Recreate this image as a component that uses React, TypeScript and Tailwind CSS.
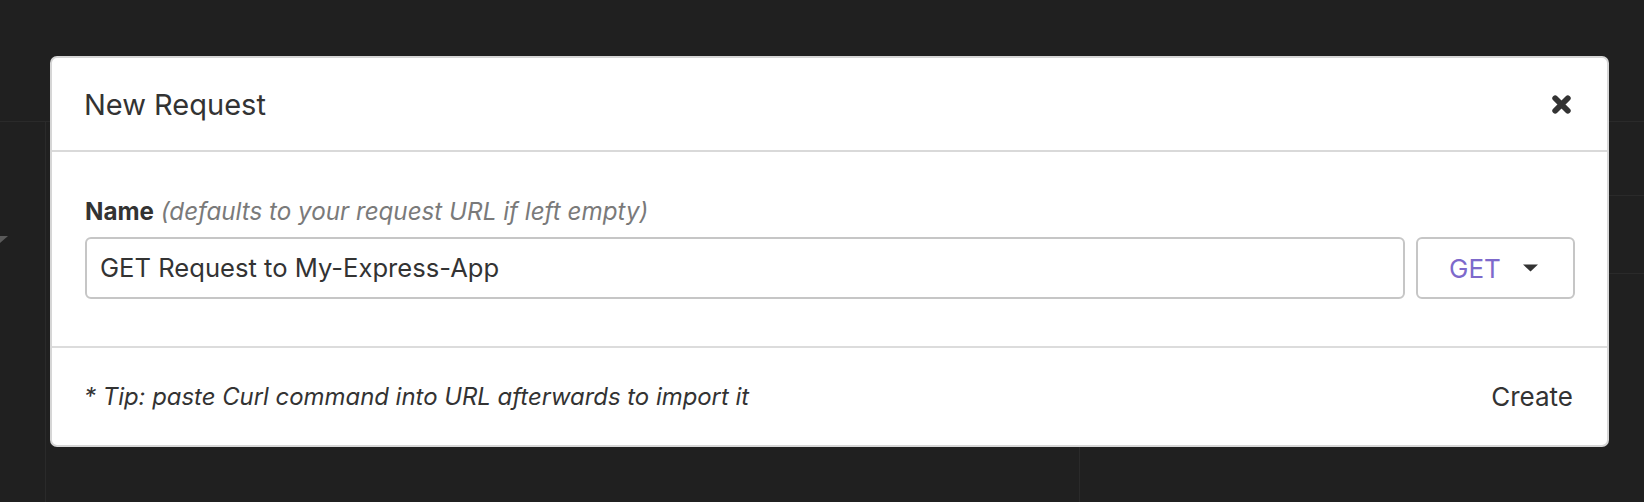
import React from "react";

function CloseIcon() {
  return (
    <svg width="21" height="21" viewBox="0 0 20 20" aria-hidden="true">
      <path
        d="M4 4 L16 16 M16 4 L4 16"
        stroke="#333333"
        strokeWidth="5.5"
        strokeLinecap="round"
        fill="none"
      />
    </svg>
  );
}

function Caret() {
  return (
    <svg width="15" height="8" viewBox="0 0 15 8" aria-hidden="true">
      <polygon points="0,0.5 15,0.5 7.5,7.5" fill="#333333" />
    </svg>
  );
}

export default function App() {
  const font = { fontFamily: "Inter, 'Noto Sans', 'Liberation Sans', sans-serif" };
  return (
    <div className="relative h-[502px] w-full overflow-hidden bg-[#202020]" style={font}>
      {/* background app layout */}
      <div className="h-[122px] border-b border-[#2a2a2a]" />
      <div className="flex h-[380px]">
        <div className="w-[46px] border-r border-[#2a2a2a]">
          <div className="mt-[114px]">
            <svg width="8" height="7" viewBox="0 0 8 7" aria-hidden="true">
              <polygon points="0,0 8,0 0,7" fill="#5a5a5a" />
            </svg>
          </div>
        </div>
        <div className="w-[1034px] border-r border-[#2a2a2a]" />
        <div className="flex flex-1 flex-col">
          <div className="h-[74px] border-b border-[#2a2a2a]" />
          <div className="h-[78px] border-b border-[#2a2a2a]" />
        </div>
      </div>

      {/* modal */}
      <div className="absolute left-[50px] top-[56px] flex h-[391px] w-[1559px] flex-col rounded-[7px] border-2 border-[#d6d6d6] bg-white">
        <div className="flex h-[94px] shrink-0 items-center justify-between border-b-2 border-[#d9d9d9] pl-8 pr-[35px]">
          <div className="text-[29px] leading-none text-[#333333]">New Request</div>
          <button className="flex items-center">
            <CloseIcon />
          </button>
        </div>

        <div className="flex h-[196px] shrink-0 flex-col border-b-2 border-[#dcdcdc] pl-[33px] pr-8 pt-[45px]">
          <div className="h-[30px] text-[24.2px] leading-[30px]">
            <span className="font-bold text-[#333333]">Name</span>{" "}
            <span className="italic text-[#7a7a7a]">(defaults to your request URL if left empty)</span>
          </div>
          <div className="mt-[10px] flex h-[62px] gap-[11px]">
            <div className="flex flex-1 items-center rounded-[6px] border-2 border-[#c6c6c6] pl-[13px] text-[25.6px] text-[#333333]">
              GET Request to My-Express-App
            </div>
            <div className="flex w-[159px] items-center justify-center gap-[22px] rounded-[6px] border-2 border-[#c6c6c6] pr-[4px]">
              <span className="text-[26px] text-[#7d69cb]">GET</span>
              <Caret />
            </div>
          </div>
        </div>

        <div className="flex flex-1 items-center justify-between pl-8 pr-[34px]">
          <div className="text-[23.9px] italic text-[#333333]">
            * Tip: paste Curl command into URL afterwards to import it
          </div>
          <div className="text-[26px] text-[#333333]">Create</div>
        </div>
      </div>
    </div>
  );
}
